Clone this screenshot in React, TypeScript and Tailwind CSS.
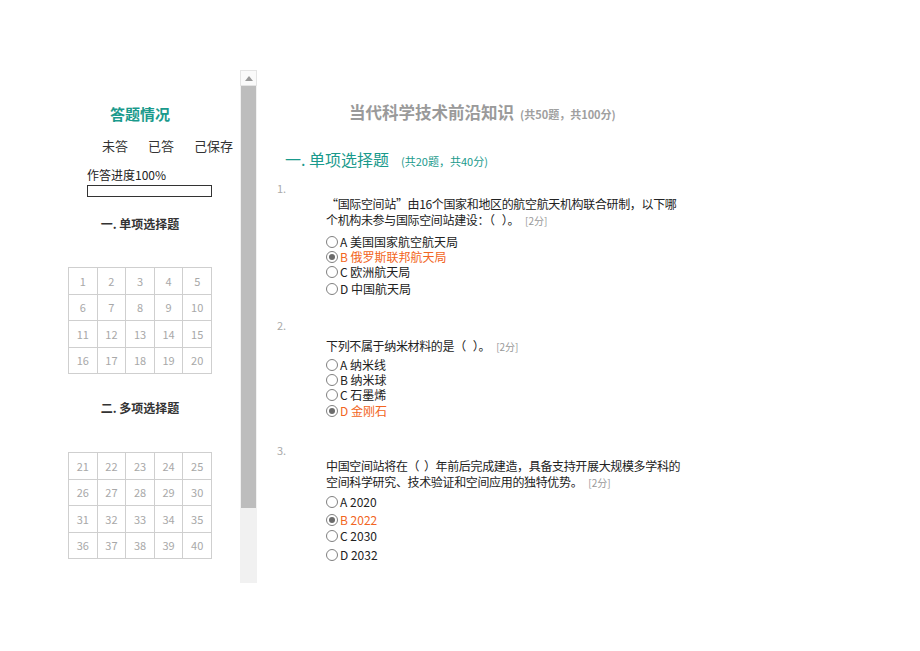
const font = "font-['Noto_Sans_CJK_SC','Noto_Sans',sans-serif]";

const section1 = Array.from({ length: 20 }, (_, i) => i + 1);
const section2 = Array.from({ length: 20 }, (_, i) => i + 21);

function NumGrid({ nums }: { nums: number[] }) {
  return (
    <div className="grid w-[144px] grid-cols-5 border-l border-t border-[#cfcfcf]">
      {nums.map((n) => (
        <div
          key={n}
          className="flex h-[26.5px] items-center justify-center border-b border-r border-[#cfcfcf] text-[11px] text-[#a8a8a8]"
        >
          {n}
        </div>
      ))}
    </div>
  );
}

function Radio({ checked }: { checked?: boolean }) {
  return (
    <span className="mr-[2px] inline-flex h-[12px] w-[12px] shrink-0 items-center justify-center rounded-full border border-[#808080] bg-white">
      {checked && <span className="h-[6px] w-[6px] rounded-full bg-[#6b6b6b]" />}
    </span>
  );
}

type Opt = { label: string; checked?: boolean; mt: string };

function Option({ label, checked, mt }: Opt) {
  return (
    <div className={`flex h-[15px] items-center text-[12px] leading-[15px] ${mt} ${checked ? "text-[#f26522]" : "text-[#222]"}`}>
      <Radio checked={checked} />
      <span>{label}</span>
    </div>
  );
}

function Score() {
  return <span className="ml-[6px] text-[10px] tracking-normal text-[#999]">[2分]</span>;
}

export default function App() {
  return (
    <div className={`${font} flex min-h-[651px] bg-white pl-[68px] pt-[70px]`}>
      {/* left panel */}
      <div className="w-[144px]">
        <div className="mt-[35px] text-center text-[15px] font-bold leading-[18px] text-[#1a9a8c]">答题情况</div>
        <div className="mt-[15px] flex gap-[20px] whitespace-nowrap pl-[34px] text-[13px] leading-[16px] text-[#333]">
          <span>未答</span>
          <span>已答</span>
          <span>己保存</span>
        </div>
        <div className="mt-[13px] pl-[19px] text-[12px] leading-[16px] text-[#222]">作答进度100%</div>
        <div className="ml-[19px] mt-[2px] h-[12px] w-[125px] border border-[#333] bg-white" />
        <div className="mt-[19px] text-center text-[12px] font-bold leading-[16px] text-[#333]">一. 单项选择题</div>
        <div className="mt-[35px]">
          <NumGrid nums={section1} />
        </div>
        <div className="mt-[26px] text-center text-[12px] font-bold leading-[16px] text-[#333]">二. 多项选择题</div>
        <div className="mt-[36px]">
          <NumGrid nums={section2} />
        </div>
      </div>

      {/* scrollbar */}
      <div className="ml-[28px] flex h-[513px] w-[17px] flex-col bg-[#f1f1f1]">
        <div className="flex h-[16px] items-center justify-center border border-[#e4e4e4] bg-[#fafafa]">
          <span className="h-0 w-0 border-x-[4px] border-b-[5px] border-x-transparent border-b-[#9a9a9a]" />
        </div>
        <div className="mx-[1px] h-[422px] bg-[#bdbdbd]" />
      </div>

      {/* main */}
      <div className="ml-[20px] w-[430px]">
        <div className="mt-[32px] flex items-baseline pl-[72px] leading-[20px]">
          <span className="text-[16.5px] font-bold text-[#9a9a9a]">当代科学技术前沿知识</span>
          <span className="ml-[6px] text-[11px] font-bold text-[#a0a0a0]">(共50题，共100分)</span>
        </div>
        <div className="mt-[25px] flex items-baseline pl-[8px] leading-[20px] text-[#1a9a8c]">
          <span className="text-[16px]">一. 单项选择题</span>
          <span className="ml-[12px] text-[11px]">(共20题，共40分)</span>
        </div>

        {/* Q1 */}
        <div className="mt-[10px] text-[11px] leading-[14px] text-[#aaa]">1.</div>
        <div className="ml-[49px] mt-[1px] w-[370px] whitespace-nowrap text-[12px] leading-[16px] tracking-[-0.35px] text-[#222]">
          <div>“国际空间站”由16个国家和地区的航空航天机构联合研制，以下哪</div>
          <div>
            个机构未参与国际空间站建设：（&nbsp;&nbsp;&nbsp;）。
            <Score />
          </div>
        </div>
        <div className="ml-[49px]">
          <Option label="A 美国国家航空航天局" mt="mt-[5px]" />
          <Option label="B 俄罗斯联邦航天局" checked mt="mt-0" />
          <Option label="C 欧洲航天局" mt="mt-0" />
          <Option label="D 中国航天局" mt="mt-[2px]" />
        </div>

        {/* Q2 */}
        <div className="mt-[22px] text-[11px] leading-[14px] text-[#aaa]">2.</div>
        <div className="ml-[49px] mt-[6px] text-[12px] leading-[16px] tracking-[-0.35px] text-[#222]">
          下列不属于纳米材料的是（&nbsp;&nbsp;&nbsp;）。
          <Score />
        </div>
        <div className="ml-[49px]">
          <Option label="A 纳米线" mt="mt-[2px]" />
          <Option label="B 纳米球" mt="mt-0" />
          <Option label="C 石墨烯" mt="mt-0" />
          <Option label="D 金刚石" checked mt="mt-px" />
        </div>

        {/* Q3 */}
        <div className="mt-[25px] text-[11px] leading-[14px] text-[#aaa]">3.</div>
        <div className="ml-[49px] mt-px w-[370px] whitespace-nowrap text-[12px] leading-[16px] tracking-[-0.35px] text-[#222]">
          <div>中国空间站将在（&nbsp;&nbsp;）年前后完成建造，具备支持开展大规模多学科的</div>
          <div>
            空间科学研究、技术验证和空间应用的独特优势。
            <Score />
          </div>
        </div>
        <div className="ml-[49px]">
          <Option label="A 2020" mt="mt-[3px]" />
          <Option label="B 2022" checked mt="mt-[3px]" />
          <Option label="C 2030" mt="mt-px" />
          <Option label="D 2032" mt="mt-[4px]" />
        </div>
      </div>
    </div>
  );
}
